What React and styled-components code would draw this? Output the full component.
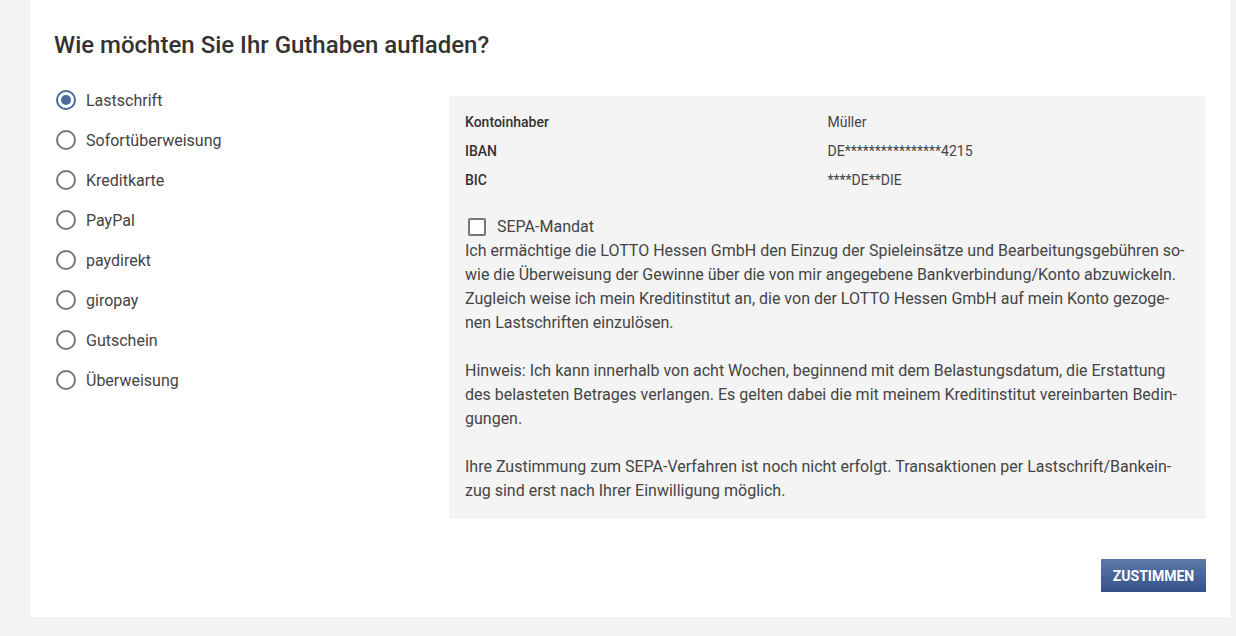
import styled, { createGlobalStyle } from 'styled-components';

const GlobalStyle = createGlobalStyle`
  html, body {
    margin: 0;
    padding: 0;
    background: #f3f3f3;
    font-family: Roboto, "Liberation Sans", Arial, sans-serif;
  }
`;

const Page = styled.div`
  display: flex;
  padding: 0 6px 19px 30px;
`;

const Card = styled.main`
  flex: 1;
  background: #fff;
  padding: 30px 24px 25px;
  display: flex;
  flex-direction: column;
`;

const Title = styled.h1`
  margin: 0 0 20px;
  font-size: 24px;
  line-height: 30px;
  font-weight: 500;
  color: #333;
`;

const Columns = styled.div`
  display: grid;
  grid-template-columns: 395px 1fr;
  align-items: start;
`;

const RadioList = styled.ul`
  list-style: none;
  margin: 0;
  padding: 0 0 0 2px;
`;

const RadioItem = styled.li`
  display: flex;
  align-items: center;
  gap: 10px;
  height: 40px;
  font-size: 16px;
  color: #444;
`;

const RadioCircle = styled.span`
  box-sizing: border-box;
  width: 20px;
  height: 20px;
  border-radius: 50%;
  border: 2px solid ${({ checked }) => (checked ? '#4a6aa0' : '#777')};
  display: flex;
  align-items: center;
  justify-content: center;

  &::after {
    content: '';
    display: ${({ checked }) => (checked ? 'block' : 'none')};
    width: 10px;
    height: 10px;
    border-radius: 50%;
    background: #4a6aa0;
  }
`;

const Panel = styled.section`
  margin-top: 16px;
  background: #f4f4f4;
  padding: 16px;
  color: #444;
`;

const Details = styled.dl`
  display: grid;
  grid-template-columns: 1fr 1fr;
  row-gap: 9px;
  margin: 0;
  font-size: 14px;
  line-height: 20px;
`;

const Term = styled.dt`
  font-weight: 500;
  color: #333;
`;

const Value = styled.dd`
  margin: 0;
  color: #444;
`;

const CheckRow = styled.label`
  display: flex;
  align-items: center;
  gap: 11px;
  margin-top: 25px;
  padding-left: 3px;
  font-size: 16px;
  line-height: 24px;
`;

const CheckBox = styled.span`
  box-sizing: border-box;
  width: 18px;
  height: 18px;
  border: 2px solid #777;
  border-radius: 2px;
  background: #fff;
`;

const Text = styled.p`
  margin: 0 0 24px;
  font-size: 16px;
  line-height: 24px;
  color: #444;

  &:last-child {
    margin-bottom: 0;
  }
`;

const Footer = styled.div`
  display: flex;
  justify-content: flex-end;
  margin-top: 40px;
`;

const Button = styled.button`
  height: 33px;
  width: 105px;
  border: none;
  padding: 0;
  background: linear-gradient(#5b79a9, #37528a);
  color: #fff;
  font-family: inherit;
  font-size: 14px;
  font-weight: 700;
  text-transform: uppercase;
  cursor: pointer;
`;

const methods = [
  'Lastschrift',
  'Sofortüberweisung',
  'Kreditkarte',
  'PayPal',
  'paydirekt',
  'giropay',
  'Gutschein',
  'Überweisung',
];

export default function App() {
  return (
    <>
      <GlobalStyle />
      <Page>
        <Card>
          <Title>Wie möchten Sie Ihr Guthaben aufladen?</Title>
          <Columns>
            <RadioList>
              {methods.map((m, i) => (
                <RadioItem key={m}>
                  <RadioCircle checked={i === 0} />
                  {m}
                </RadioItem>
              ))}
            </RadioList>
            <Panel>
              <Details>
                <Term>Kontoinhaber</Term>
                <Value>Müller</Value>
                <Term>IBAN</Term>
                <Value>DE****************4215</Value>
                <Term>BIC</Term>
                <Value>****DE**DIE</Value>
              </Details>
              <CheckRow>
                <CheckBox />
                SEPA-Mandat
              </CheckRow>
              <Text>
                Ich ermächtige die LOTTO Hessen GmbH den Einzug der Spieleinsätze und Bearbeitungsgebühren so{'\u00AD'}wie die Überweisung der Gewinne über die von mir angegebene Bankverbindung/Konto abzuwickeln. Zugleich weise ich mein Kreditinstitut an, die von der LOTTO Hessen GmbH auf mein Konto gezoge{'\u00AD'}nen Lastschriften einzulösen.
              </Text>
              <Text>
                Hinweis: Ich kann innerhalb von acht Wochen, beginnend mit dem Belastungsdatum, die Erstattung des belasteten Betrages verlangen. Es gelten dabei die mit meinem Kreditinstitut vereinbarten Bedin{'\u00AD'}gungen.
              </Text>
              <Text>
                Ihre Zustimmung zum SEPA-Verfahren ist noch nicht erfolgt. Transaktionen per Lastschrift/Bankein{'\u00AD'}zug sind erst nach Ihrer Einwilligung möglich.
              </Text>
            </Panel>
          </Columns>
          <Footer>
            <Button>Zustimmen</Button>
          </Footer>
        </Card>
      </Page>
    </>
  );
}
